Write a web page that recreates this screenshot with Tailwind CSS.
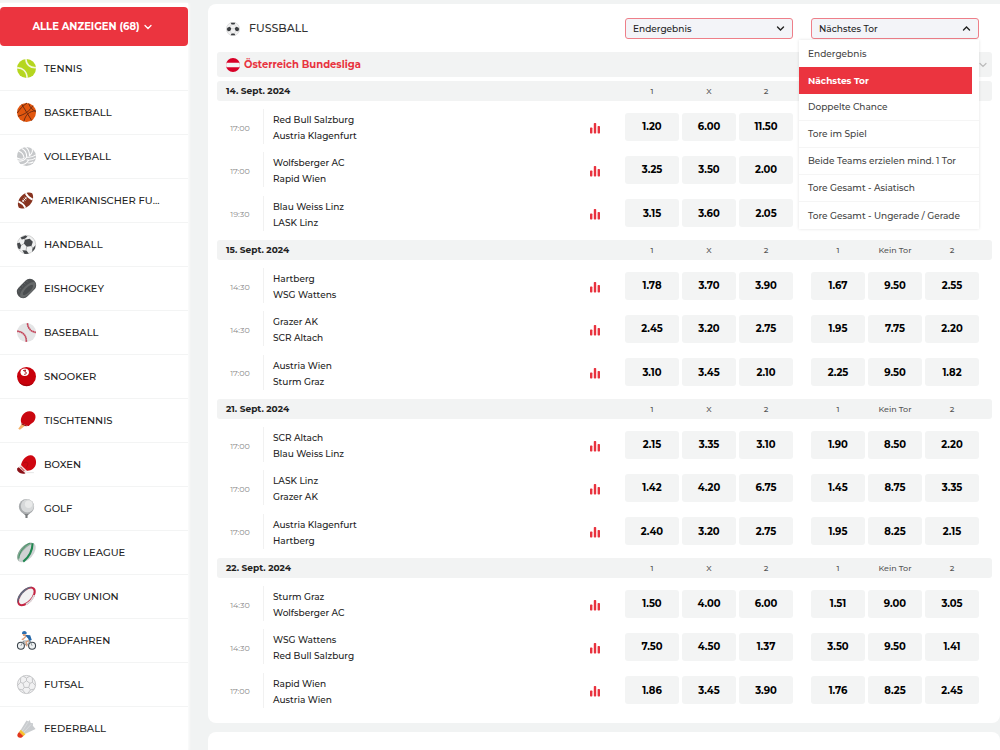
<!DOCTYPE html>
<html lang="de">
<head>
<meta charset="utf-8">
<meta name="viewport" content="width=device-width, initial-scale=1">
<title>Fussball – Österreich Bundesliga</title>
<script src="https://cdn.jsdelivr.net/npm/@tailwindcss/browser@4"></script>
</head>
<body class="bg-[#f1f3f3] font-['Montserrat','Inter',sans-serif] text-[#222] overflow-x-hidden">
<div class="flex min-h-screen items-stretch gap-5">

  <aside class="w-[188px] shrink-0 pt-[3px]">
    <div class="h-full bg-white pt-1 shadow-[1px_0_3px_rgba(255,255,255,0.9)]">
      <button type="button" class="flex h-[39px] w-full items-center justify-center gap-1 rounded bg-[#eb343f] pr-1 text-[10px] font-bold text-white">
        ALLE ANZEIGEN (68)
        <svg class="size-2" viewBox="0 0 8 8" fill="none" stroke="currentColor" stroke-width="1.3" stroke-linecap="round"><path d="M1 2.500l3 3 3-3"/></svg>
      </button>
      <nav aria-label="Sportarten" class="pt-px">
        <ul id="sports"></ul>
      </nav>
    </div>
  </aside>

  <main class="flex min-w-0 flex-1 flex-col gap-[9px] pt-1">
    <section class="rounded-lg rounded-tr-none bg-white pt-[14px] pr-2 pb-[6px] pl-[9px]">
      <header class="flex items-center pr-[13px] pl-[9px]">
        <svg class="size-[14px]" viewBox="0 0 18 18"><circle cx="9" cy="9" r="8.500" fill="#f1f1f1" stroke="#ccc" stroke-width=".7"/><g fill="#3a3d40"><path d="M6 .9h6L10.800 3.200H7.200zM6 17.100h6l-1.200-2.300H7.200zM2.200 7l2.900-.9 1.800 2.600-1.600 3-3 .2L1 9zM15.800 7l-2.900-.9-1.800 2.600 1.600 3 3 .2L17 9z"/></g><path d="M7 8.700h4M5.100 6l2.100-2.800M12.900 6l-2.100-2.800M5.300 11.700l1.900 3.100M12.700 11.700l-1.900 3.100" stroke="#bbb" stroke-width=".6"/></svg>
        <h1 class="ml-[9px] flex-1 text-[11px] font-medium text-[#333]">FUSSBALL</h1>
        <div class="flex gap-[18px]">
          <div class="relative w-[168px]">
            <select aria-label="Markt 1" class="block h-[21px] w-full appearance-none rounded-[3px] border border-[#ee7f89] bg-[#f3f4f8] pl-[7px] text-[9px] font-medium text-[#222]">
              <option>Endergebnis</option><option>Nächstes Tor</option>
            </select>
            <svg class="pointer-events-none absolute top-[6px] right-2 size-[9px]" viewBox="0 0 9 9" fill="none" stroke="#222" stroke-width="1.400" stroke-linecap="round"><path d="M1.500 3l3 3 3-3"/></svg>
          </div>
          <div class="relative w-[168px]">
            <select aria-label="Markt 2" class="block h-[21px] w-full appearance-none rounded-[3px] border border-[#ee7f89] bg-[#f3f4f8] pl-[7px] text-[9px] font-medium text-[#222]">
              <option>Nächstes Tor</option><option>Endergebnis</option>
            </select>
            <svg class="pointer-events-none absolute top-[6px] right-2 size-[9px]" viewBox="0 0 9 9" fill="none" stroke="#222" stroke-width="1.400" stroke-linecap="round"><path d="M1.500 6l3-3 3 3"/></svg>
            <ul class="absolute top-[22px] right-0 z-10 w-[180px] bg-white text-[9px] font-medium text-[#444] shadow-[0_0_3px_rgba(0,0,0,0.12)]">
              <li><button type="button" class="block h-[27px] w-full pl-[9px] text-left">Endergebnis</button></li>
              <li><button type="button" class="block h-[27px] w-[173px] bg-[#eb343f] pl-[9px] text-left font-bold text-white">Nächstes Tor</button></li>
              <li><button type="button" class="block h-[27px] w-full border-b border-[#f5f5f5] pl-[9px] text-left">Doppelte Chance</button></li>
              <li><button type="button" class="block h-[27px] w-full border-b border-[#f5f5f5] pl-[9px] text-left">Tore im Spiel</button></li>
              <li><button type="button" class="block h-[27px] w-full border-b border-[#f5f5f5] pl-[9px] text-left">Beide Teams erzielen mind. 1 Tor</button></li>
              <li><button type="button" class="block h-[27px] w-full border-b border-[#f5f5f5] pl-[9px] text-left">Tore Gesamt - Asiatisch</button></li>
              <li><button type="button" class="block h-[27px] w-full pl-[9px] text-left">Tore Gesamt - Ungerade / Gerade</button></li>
            </ul>
          </div>
        </div>
      </header>

      <h2 class="mt-[13px] mb-1 flex h-[25px] items-center rounded-[3px] bg-[#f2f3f3] pr-[5px] pl-[9px] text-[10px] font-bold text-[#e8333f]">
        <svg class="mr-1 size-[14px]" viewBox="0 0 14 14"><clipPath id="flag"><circle cx="7" cy="7" r="7"/></clipPath><g clip-path="url(#flag)"><path fill="#d80027" d="M0 0h14v14H0z"/><path fill="#f4f4f4" d="M0 4.700h14v4.600H0z"/></g></svg>
        <span class="flex-1">Österreich Bundesliga</span>
        <svg class="size-2" viewBox="0 0 8 8" fill="none" stroke="#bbb" stroke-width="1.200" stroke-linecap="round"><path d="M1 2.500l3 3 3-3"/></svg>
      </h2>
      <div id="days"></div>
    </section>
    <section class="min-h-[18px] flex-1 rounded-t-lg bg-white"></section>
  </main>
</div>

<script>
const sports = [
  ['TENNIS', '<circle cx="9" cy="9" r="9" fill="#b5d61f"/><path d="M8.500 0C8.500 5 12 8.500 18 8.300M0 8.500c5-.5 9.500 3 9.500 9.500" fill="none" stroke="#f4f8dc" stroke-width="1.500"/>'],
  ['BASKETBALL', '<circle cx="9" cy="9" r="9" fill="#e2570f"/><path d="M4.500 1.300l9.500 15.500M1 12.500C6 11.500 12 8 15 2.500M9.500 0C5 3 2.500 6 .3 9.500M17.800 7.500C12 7.500 8 11 6.500 17.500M11 .5c1.500 4 4 6.500 7 7.500" fill="none" stroke="#6b2a10" stroke-width=".9"/>'],
  ['VOLLEYBALL', '<circle cx="9" cy="9" r="9" fill="#c6c8ca"/><path d="M8 0c3 2 4 5 3.800 8.500M4.500 1.500C8 3 9.200 6 9.200 9.500M1.800 4c3 1 4.500 3 5 6.500M9 9.500c3 .5 6 0 8.800-2M9 12c3 .8 6 .3 8.300-1.500M10 15c2 .3 4 0 5.500-1M9.200 9.500C7 13 4 14 .8 13M6.800 10.500C5 12 2.500 11.800 0 10.500M11 12.500c-2 3-4 4.500-7 4M11.800 8.500C14 6.500 15 4.500 14.500 2" fill="none" stroke="#fff" stroke-width="1"/>'],
  ['AMERIKANISCHER FU...', '<g transform="rotate(-48 9 9)"><path d="M-1.500 9C1.500 .5 16.500 .5 19.500 9c-3 8.500-18 8.500-21 0z" fill="#87331f"/><path d="M3.200 4c1.100 3 1.100 7 0 10M14.800 4c-1.100 3-1.100 7 0 10" stroke="#fff" stroke-width="1.900" fill="none"/><path d="M6 7.500h6M7 6v3M9 6v3M11 6v3" stroke="#fff" stroke-width=".9"/></g>'],
  ['HANDBALL', '<circle cx="9" cy="9" r="8.700" fill="#f0f1f1" stroke="#bbb" stroke-width=".6"/><g fill="#45484b"><path d="M7.500 4.500l4.500-1 3 3-1.300 4-4.500.6-2.700-3zM3.500 2.300L8 .4l2 1-2.500 2.200-3 .6zM0 8l2.500-1 1.500 3-1 3.500L1 12.500zM5 14.500l4 .3 2.200 3-4 .1zM14.500 13l3-3.200-.5 3.200-2.500 3z"/></g><path d="M7.500 4.500L6.800 3.500M6.500 8.100L3.800 10M9.200 11.100L8.500 14.800M13.700 10.500l1.500 2.300" stroke="#888" stroke-width=".6"/>'],
  ['EISHOCKEY', '<g transform="rotate(-45 9 9)"><rect x="-1.500" y="3" width="21" height="12" rx="6" fill="#4d5052"/><ellipse cx="9" cy="10.800" rx="9.700" ry="4" fill="#66696a"/><ellipse cx="9" cy="10.900" rx="6.500" ry="2.200" fill="#4a4d4f"/><path d="M2 4.500v2M5 3.700v2M8 3.500v2M11 3.500v2M14 3.800v2" stroke="#77797a" stroke-width=".5"/></g>'],
  ['BASEBALL', '<circle cx="9" cy="9" r="9" fill="#e4e5e6"/><path d="M10 .3c0 4.500 3.200 8 7.900 8.500M.2 7.800c5 .2 9 4 8.600 10" fill="none" stroke="#cd6273" stroke-width="1.700" stroke-dasharray="1.400 .5"/><path d="M10 .3c0 4.500 3.200 8 7.900 8.500M.2 7.800c5 .2 9 4 8.600 10" fill="none" stroke="#b8233c" stroke-width=".6"/>'],
  ['SNOOKER', '<circle cx="9" cy="9" r="9" fill="#c8000b"/><ellipse cx="7.300" cy="5" rx="4" ry="3.500" fill="#fff"/><path d="M5.800 3.500l2.300-.6-.7 1.700c2.200-.1 1.900 2.600-.6 2.300" fill="none" stroke="#a3000b" stroke-width=".9"/><path d="M1 13c3 3.500 9 5 14.500 2.500A9 9 0 0 1 1 13z" fill="#a30009"/>'],
  ['TISCHTENNIS', '<path d="M5 11.500L1.200 16.800l1.500 1L8 13.800z" fill="#f4b36b"/><path d="M4.200 11.500C2 6 7 0 12 .2c5 .1 7 4.800 4.500 9-1 1.800-2.500 2.300-3.500 3-1 .8-1.500 2.200-2.600 2z" fill="#ca0710"/><path d="M4.200 11.500l6.200 2.700-2 .3-4-1.700z" fill="#8d0d12"/>'],
  ['BOXEN', '<path d="M3.800 9.800C4.500 5 8.500 0 13 .2c4.500.2 6.200 6 4.400 10-1.600 3.600-5 4.600-8.600 5z" fill="#cf0711"/><path d="M3.500 9.500l6 5.500-1.800 2.300L1.300 12z" fill="#f0e4e3"/><path d="M3.200 11.200l3.800 4" stroke="#c11" stroke-width=".9"/><path d="M1.600 11.500L8 17.200C4.300 18.900-.8 15.800.2 12.500z" fill="#8a1118"/><path d="M6 8c2-2 4-1.500 4.500.5L9 12" fill="none" stroke="#a8080f" stroke-width=".8"/><path d="M9 16.700h7" stroke="#ddd" stroke-width=".7"/>'],
  ['GOLF', '<path d="M5 12.500h8l-3 3.200V18H8v-2.300z" fill="#777a7c"/><circle cx="9" cy="7.200" r="7.200" fill="#a9acae"/><circle cx="9.800" cy="6.500" r="6.200" fill="#d7d9da"/><circle cx="11" cy="5" r="3.500" fill="#e9eaea"/>'],
  ['RUGBY LEAGUE', '<g transform="rotate(-48 9 9)"><ellipse cx="9" cy="9" rx="11" ry="6.300" fill="#cfd2d3"/><path d="M-2 9C-1 .6 19 .6 20 9 16 4.500 2 4.500-2 9z" fill="#86a794"/><path d="M.5 12.500c5 .8 13 0 18.800-5" fill="none" stroke="#1f8750" stroke-width="1.900"/><path d="M0 7.500C4 3.500 13 3 18 5.500" fill="none" stroke="#3c8f61" stroke-width=".8"/></g>'],
  ['RUGBY UNION', '<g transform="rotate(-48 9 9)"><ellipse cx="9" cy="9" rx="11" ry="6.300" fill="#c42543"/><path d="M-1.500 7C2 1 16 1 19.500 7 14 4 4 4-1.500 7z" fill="#62697c"/><ellipse cx="9" cy="8.800" rx="9.200" ry="4.300" fill="#f2f2f3"/><path d="M3 13.600c4 1.200 9 1.200 12-.2" fill="none" stroke="#dcdcde" stroke-width="1.600"/></g>'],
  ['RADFAHREN', '<g fill="#eef1f2" stroke="#39424a" stroke-width="1"><circle cx="3.700" cy="14" r="3.300"/><circle cx="14.300" cy="14" r="3.300"/></g><path d="M3.700 14L6 9.500h6.500l1.800 4.500M6 9.500L8.800 14l3.700-4.500" fill="none" stroke="#7e8990" stroke-width=".8"/><path d="M7 3.500l5.500.5 1.500 4.500-2.500 1-1-2.500z" fill="#2467a8"/><path d="M4.800 2c0-2.500 4-2.700 4.500 0l-.5.800H4.800z" fill="#2c6fb0"/><path d="M5.300 2.800h2.800v1.900H5.800z" fill="#d99d79"/><path d="M8.500 5L5.500 8l-1-.4M11.500 9L8.500 10.500l1 4" fill="none" stroke="#d99d79" stroke-width="1.300"/>'],
  ['FUTSAL', '<g fill="#f1f1f2" stroke="#bcbec0" stroke-width=".8"><circle cx="9" cy="9" r="8.600"/><path d="M9 5.500l3.300 2.400-1.200 3.900H6.900L5.700 7.900zM9 5.500V3M12.300 7.900l2.400-1M11.100 11.800l1.700 2.300M6.900 11.800l-1.700 2.300M5.700 7.900l-2.400-1M9 3L5.800 1M9 3l3.200-2M14.700 6.900L14.500 3M14.700 6.900l2.700 3M12.800 14.100l3.600-.8M12.800 14.100L10.500 17M5.200 14.100L7.500 17M5.200 14.100l-3.600-.8M3.300 6.900l-2.700 3M3.300 6.900L3.500 3"/></g>'],
  ['FEDERBALL', '<path d="M3.500 10.500L9 1.500l1.800.8L12 1l1 2.800 2.200.2-.2 2.500 2.600 3L7.500 14.300z" fill="#c9cccf"/><path d="M5 11.500L10.500 3M6 13l7.500-8" stroke="#e6e8ea" stroke-width=".5"/><path d="M3.600 10.300l4.400 4.200-2 1.800-4.200-3.900z" fill="#f6c330"/><path d="M2 12.200l4 3.800c-1.800 2.300-4.200 2-5.200.8-1-1.200-.4-3.200 1.200-4.600z" fill="#e1371d"/>']
];
document.getElementById('sports').innerHTML = sports.map(([name, art]) => `
  <li class="h-11 border-b border-[#f3f4f4]">
    <a href="#" class="flex h-full items-center pl-[17px] text-[10px] font-medium text-[#222] ${name.endsWith('...') ? 'gap-[7px]' : 'gap-2'}">
      <svg class="${name.endsWith('...') ? 'size-[17px]' : 'size-[19px]'} shrink-0 overflow-visible" viewBox="0 0 18 18" aria-hidden="true">${art}</svg>${name}
    </a>
  </li>`).join('');

const days = [
  ['14. Sept. 2024', [
    ['17:00', 'Red Bull Salzburg', 'Austria Klagenfurt', ['1.20', '6.00', '11.50']],
    ['17:00', 'Wolfsberger AC', 'Rapid Wien', ['3.25', '3.50', '2.00']],
    ['19:30', 'Blau Weiss Linz', 'LASK Linz', ['3.15', '3.60', '2.05']]]],
  ['15. Sept. 2024', [
    ['14:30', 'Hartberg', 'WSG Wattens', ['1.78', '3.70', '3.90'], ['1.67', '9.50', '2.55']],
    ['14:30', 'Grazer AK', 'SCR Altach', ['2.45', '3.20', '2.75'], ['1.95', '7.75', '2.20']],
    ['17:00', 'Austria Wien', 'Sturm Graz', ['3.10', '3.45', '2.10'], ['2.25', '9.50', '1.82']]]],
  ['21. Sept. 2024', [
    ['17:00', 'SCR Altach', 'Blau Weiss Linz', ['2.15', '3.35', '3.10'], ['1.90', '8.50', '2.20']],
    ['17:00', 'LASK Linz', 'Grazer AK', ['1.42', '4.20', '6.75'], ['1.45', '8.75', '3.35']],
    ['17:00', 'Austria Klagenfurt', 'Hartberg', ['2.40', '3.20', '2.75'], ['1.95', '8.25', '2.15']]]],
  ['22. Sept. 2024', [
    ['14:30', 'Sturm Graz', 'Wolfsberger AC', ['1.50', '4.00', '6.00'], ['1.51', '9.00', '3.05']],
    ['14:30', 'WSG Wattens', 'Red Bull Salzburg', ['7.50', '4.50', '1.37'], ['3.50', '9.50', '1.41']],
    ['17:00', 'Rapid Wien', 'Austria Wien', ['1.86', '3.45', '3.90'], ['1.76', '8.25', '2.45']]]]
];
const heads = labels => `<div class="grid w-[168px] grid-cols-3 gap-[3px] text-center text-[8px] font-medium text-[#555]">${labels.map(l => `<span>${l}</span>`).join('')}</div>`;
const odds = values => `<div class="grid w-[168px] grid-cols-3 gap-[3px]">${values.map(v => `<button type="button" class="h-7 rounded-[3px] bg-[#f3f4f4] text-[10px] font-bold text-black">${v}</button>`).join('')}</div>`;
document.getElementById('days').innerHTML = days.map(([date, games], i) => `
  <section class="pb-[5px]">
    <h3 class="flex h-5 items-center gap-[18px] rounded-[3px] bg-[#f2f3f3] pr-[13px] pl-[9px] text-[9px] font-bold">
      <span class="flex-1">${date}</span>${heads(['1', 'X', '2'])}${heads(i ? ['1', 'Kein Tor', '2'] : [])}
    </h3>
    <div class="mt-1 grid h-[130px] grid-rows-3">
      ${games.map(([time, home, away, first, second]) => `
      <div class="flex items-center pr-[13px]">
        <time class="w-[46px] pt-[2px] text-center text-[8px] text-[#888]">${time}</time>
        <div class="flex-1 border-l border-[#f1f1f1] pt-[3px] pl-[9px] text-[9px] leading-[16px] font-medium"><p>${home}</p><p>${away}</p></div>
        <button type="button" aria-label="Statistik" class="mr-6 pt-[2px] text-[#e8323e]"><svg class="size-3" viewBox="0 0 12 12" fill="currentColor"><rect x="1" y="5.500" width="2.400" height="6" rx=".7"/><rect x="4.800" y="1" width="2.400" height="10.500" rx=".7"/><rect x="8.600" y="4" width="2.400" height="7.500" rx=".7"/></svg></button>
        <div class="flex gap-[18px]">${odds(first)}${odds(second || [])}</div>
      </div>`).join('')}
    </div>
  </section>`).join('');
</script>
</body>
</html>
